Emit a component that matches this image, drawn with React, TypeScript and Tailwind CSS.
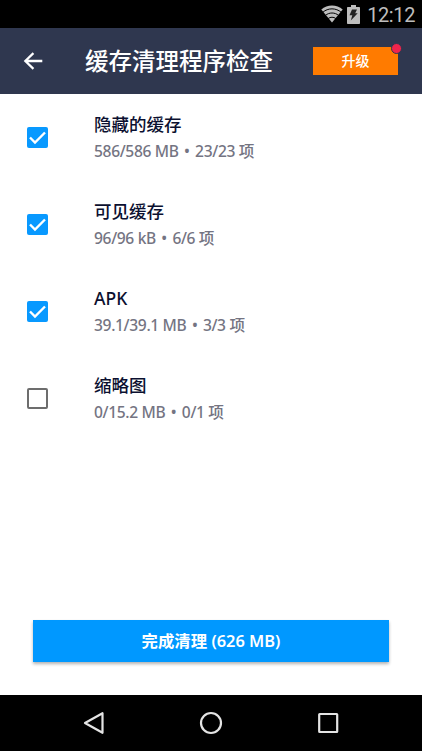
import { clsx } from "clsx";

const items = [
  { title: "隐藏的缓存", size: "586/586 MB", count: "23/23 项", checked: true },
  { title: "可见缓存", size: "96/96 kB", count: "6/6 项", checked: true },
  { title: "APK", size: "39.1/39.1 MB", count: "3/3 项", checked: true },
  { title: "缩略图", size: "0/15.2 MB", count: "0/1 项", checked: false },
];

function StatusBar() {
  return (
    <div className="flex h-7 shrink-0 items-center justify-end bg-black pr-[7px] text-[#bdbdbd]">
      <svg className="mr-1 h-[18px] w-[22px]" viewBox="0 0 22 18" fill="none">
        <path
          d="M11 17.5 0.3 4.6C6.2-.9 15.8-.9 21.7 4.6Z"
          fill="currentColor"
        />
        <path
          d="M1.8 7.3c5.2-4.6 13.2-4.6 18.4 0M4.4 10.4c3.8-3.2 9.4-3.2 13.2 0M7.2 13.5c2.2-1.7 5.4-1.7 7.6 0"
          stroke="#000"
          strokeWidth="1"
        />
      </svg>
      <svg className="mr-[7px] h-[19px] w-[13px]" viewBox="0 0 13 19">
        <path
          d="M4 0h5v2h3.2q.8 0 .8.8v15.4q0 .8-.8.8H.8q-.8 0-.8-.8V2.8q0-.8.8-.8H4Z"
          fill="currentColor"
        />
        <path d="M5 4.5h5L8.2 8.3h2.5L3.8 15.5l1.5-5.300H2.500Z" fill="#222" />
      </svg>
      <span className="pt-px font-[Roboto,sans-serif] text-[20px] leading-6 tracking-[-0.4px]">
        12:12
      </span>
    </div>
  );
}

function Header() {
  return (
    <header className="flex h-[66px] shrink-0 items-center bg-[#2f374f] pr-6 pl-[21px] text-white">
      <button aria-label="返回" className="-mt-0.5">
        <svg className="size-6" viewBox="0 0 24 24" fill="currentColor">
          <path d="M21.3 11.8H7.2l6-5.900L11.700 4.300 2.700 13l9 8.700 1.500-1.600-6-5.900h14.100Z" />
        </svg>
      </button>
      <h1 className="ml-10 flex-1 text-[23.5px] leading-8 font-medium whitespace-nowrap">
        缓存清理程序检查
      </h1>
      <button className="relative h-7 w-[85px] bg-[#ff7b00] text-[14px] leading-[26px] font-medium">
        升级
        <span className="absolute -top-[4px] -right-[4px] size-[11px] rounded-full border-[1.5px] border-[#2f374f] bg-[#f0244c]" />
      </button>
    </header>
  );
}

function Checkbox({ checked }: { checked: boolean }) {
  return (
    <span
      role="checkbox"
      aria-checked={checked}
      className={clsx(
        "flex size-[21px] shrink-0 items-center justify-center rounded-[2px]",
        checked ? "bg-[#0899ff]" : "border-2 border-[#6d6d6d]"
      )}
    >
      {checked && (
        <svg className="size-[21px]" viewBox="0 0 21 21" fill="none">
          <path d="m3 10.500 5 5L18 5.500" stroke="#fff" strokeWidth="2.400" />
        </svg>
      )}
    </span>
  );
}

function NavigationBar() {
  return (
    <nav className="flex h-14 shrink-0 items-center justify-between bg-black px-[82px] text-[#e4e4e4]">
      <svg className="size-6" viewBox="0 0 24 24" fill="none">
        <path
          d="M20.500 2.200v19.600L3 12Z"
          stroke="currentColor"
          strokeWidth="2.200"
          strokeLinejoin="round"
        />
      </svg>
      <svg className="size-6" viewBox="0 0 24 24" fill="none">
        <circle cx="12" cy="12" r="10" stroke="currentColor" strokeWidth="2.200" />
      </svg>
      <svg className="size-6" viewBox="0 0 24 24" fill="none">
        <rect
          x="3.200"
          y="3"
          width="18"
          height="18"
          rx="0.500"
          stroke="currentColor"
          strokeWidth="2.200"
        />
      </svg>
    </nav>
  );
}

export default function App() {
  return (
    <div className="flex h-[751px] w-[422px] flex-col bg-white font-['Noto_Sans','Noto_Sans_CJK_SC',sans-serif]">
      <StatusBar />
      <Header />
      <main className="flex-1">
        {items.map((item) => (
          <div key={item.title} className="flex h-[87px] items-center pl-[27px]">
            <Checkbox checked={item.checked} />
            <div className="mt-px ml-[46px]">
              <h2 className="text-[17.5px] leading-[26px] font-medium text-[#0b1030]">
                {item.title}
              </h2>
              <p className="text-[15.6px] leading-[28px] font-medium tracking-[-0.35px] text-[#747482]">
                {item.size}
                <span className="mx-[5.5px]">•</span>
                {item.count}
              </p>
            </div>
          </div>
        ))}
      </main>
      <div className="shrink-0 px-[33px] pb-[33px]">
        <button className="block h-[42px] w-full bg-[#0098ff] text-[16.4px] leading-[42px] font-semibold text-white shadow-[0_2px_3px_rgba(0,0,0,0.3)]">
          完成清理 (626 MB)
        </button>
      </div>
      <NavigationBar />
    </div>
  );
}
